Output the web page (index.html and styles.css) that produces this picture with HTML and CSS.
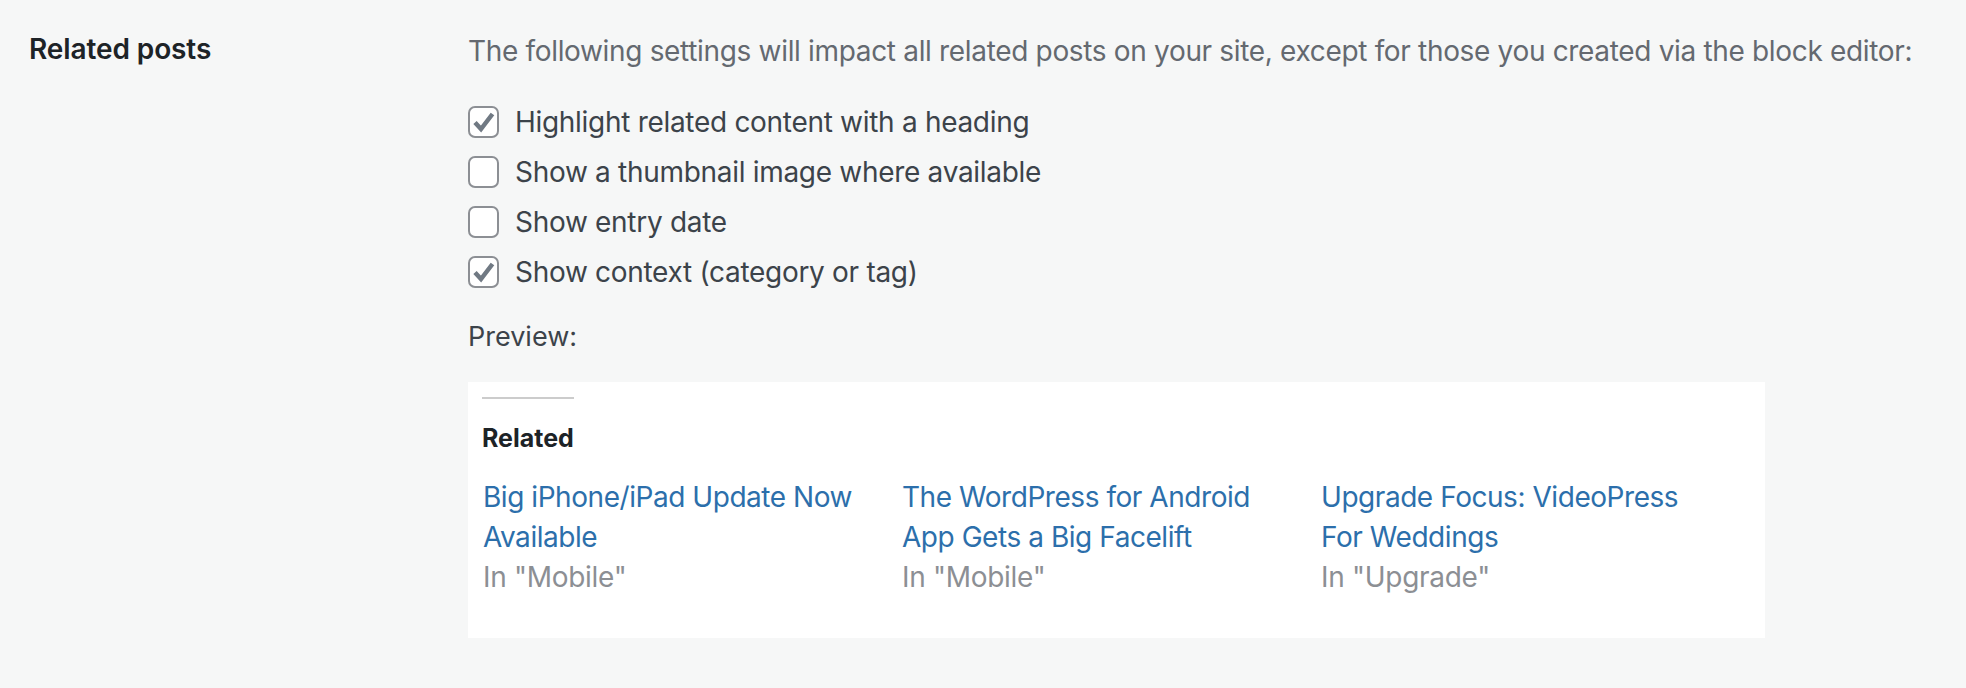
FILE: index.html
```html
<!DOCTYPE html>
<html lang="en">
<head>
<meta charset="utf-8">
<title>Related posts</title>
<link rel="stylesheet" href="styles.css">
</head>
<body>
<div class="setting-row">
  <div class="setting-label">Related posts</div>
  <div class="setting-body">
    <p class="description">The following settings will impact all related posts on your site, except for those you created via the block editor:</p>
    <ul class="options">
      <li class="option">
        <span class="box checked"><svg viewBox="0 0 31 32" width="31" height="32"><path d="M7 16.5 L13 23 L24.5 8" /></svg></span>
        <span class="option-text">Highlight related content with a heading</span>
      </li>
      <li class="option">
        <span class="box"></span>
        <span class="option-text">Show a thumbnail image where available</span>
      </li>
      <li class="option">
        <span class="box"></span>
        <span class="option-text">Show entry date</span>
      </li>
      <li class="option">
        <span class="box checked"><svg viewBox="0 0 31 32" width="31" height="32"><path d="M7 16.5 L13 23 L24.5 8" /></svg></span>
        <span class="option-text">Show context (category or tag)</span>
      </li>
    </ul>
    <div class="preview-label">Preview:</div>
    <div class="preview">
      <div class="preview-rule"></div>
      <div class="preview-heading">Related</div>
      <div class="posts">
        <div class="post">
          <a class="post-title" href="#">Big iPhone/iPad Update Now Available</a>
          <div class="post-context">In "Mobile"</div>
        </div>
        <div class="post">
          <a class="post-title" href="#">The WordPress for Android App Gets a Big Facelift</a>
          <div class="post-context">In "Mobile"</div>
        </div>
        <div class="post">
          <a class="post-title" href="#">Upgrade Focus: VideoPress For Weddings</a>
          <div class="post-context">In "Upgrade"</div>
        </div>
      </div>
    </div>
  </div>
</div>
</body>
</html>
```

FILE: styles.css
```css
html, body {
  margin: 0;
  padding: 0;
  background: #f6f7f7;
}
body {
  font-family: Inter, "Noto Sans", "Liberation Sans", sans-serif;
  color: #3c434a;
  width: 1966px;
  height: 688px;
  overflow: hidden;
}
.setting-row {
  display: flex;
  padding: 31px 0 0 29px;
}
.setting-label {
  width: 439px;
  flex: none;
  font-size: 28px;
  font-weight: 600;
  line-height: 40px;
  color: #1d2327;
  margin-top: -2px;
  letter-spacing: -0.1px;
}
.setting-body {
  flex: 1;
}
.description {
  margin: 0;
  font-size: 28px;
  line-height: 40px;
  color: #646970;
  letter-spacing: -0.33px;
}
.options {
  list-style: none;
  margin: 26px 0 0 0;
  padding: 0;
}
.option {
  display: flex;
  align-items: center;
  height: 50px;
}
.box {
  width: 31px;
  height: 32px;
  box-sizing: border-box;
  border: 2px solid #8c8f94;
  border-radius: 7px;
  background: #fff;
  flex: none;
  position: relative;
}
.box svg {
  position: absolute;
  left: -2px;
  top: -2px;
}
.box svg path {
  fill: none;
  stroke: #707983;
  stroke-width: 4.5;
  stroke-linecap: butt;
  stroke-linejoin: miter;
}
.option-text {
  margin-left: 16px;
  font-size: 28px;
  line-height: 40px;
  color: #3c434a;
  letter-spacing: -0.3px;
}
.preview-label {
  margin-top: 20px;
  font-size: 27px;
  line-height: 40px;
  color: #3c434a;
}
.preview {
  margin-top: 25px;
  width: 1297px;
  box-sizing: border-box;
  background: #fff;
  padding: 15px 14px 41px 14px;
}
.preview-rule {
  width: 92px;
  height: 2px;
  background: #cccccc;
}
.preview-heading {
  margin-top: 19px;
  font-size: 25px;
  font-weight: 700;
  line-height: 40px;
  color: #1d2327;
}
.posts {
  display: flex;
  margin-top: 19px;
  padding-left: 1px;
}
.post {
  width: 419px;
  box-sizing: border-box;
  padding-right: 30px;
  flex: none;
}
.post-title {
  display: block;
  font-size: 28px;
  line-height: 40px;
  color: #2c6fab;
  text-decoration: none;
  letter-spacing: -0.45px;
}
.post-context {
  font-size: 28px;
  line-height: 40px;
  color: #8c8f94;
  letter-spacing: -0.3px;
}
```
